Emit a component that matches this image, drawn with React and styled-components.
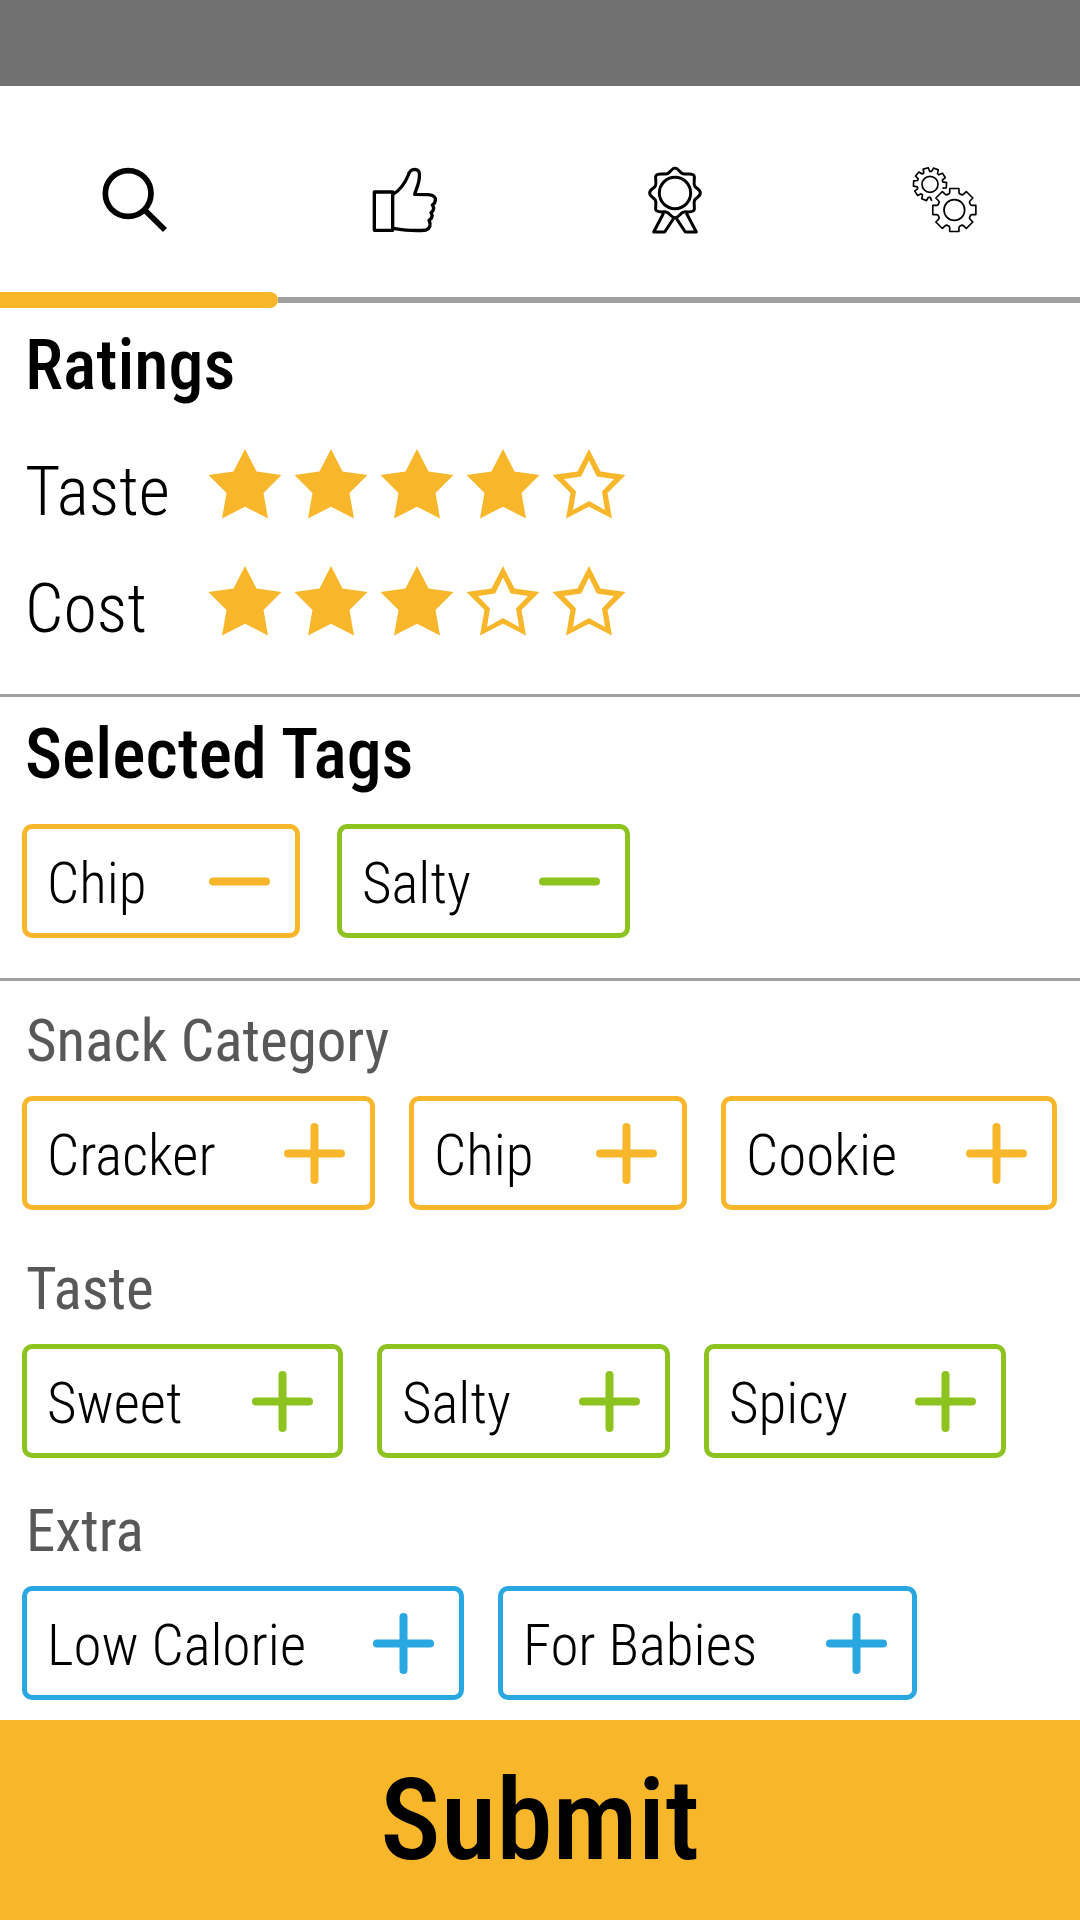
import React, { useState } from "react";
import styled, { createGlobalStyle } from "styled-components";

const colors = {
  amber: "#f8b62b",
  green: "#8dc31f",
  blue: "#29a7e1",
  line: "#9f9f9f",
  muted: "#595757",
};

const GlobalStyle = createGlobalStyle`
  * { box-sizing: border-box; }
  body { margin: 0; background: #ffffff; }
  button { font-family: inherit; color: inherit; cursor: pointer; }
`;

const Page = styled.div`
  display: flex;
  flex-direction: column;
  min-height: 100vh;
  color: #000000;
  font-family: "Roboto Condensed", "Liberation Sans Narrow", "Liberation Sans", sans-serif;
`;

const StatusBar = styled.div`
  height: 86px;
  background: #717171;
`;

const TabBar = styled.nav`
  display: grid;
  grid-template-columns: repeat(4, 1fr);
  padding: 64px 0 42px;
`;

const Tab = styled.button`
  display: flex;
  justify-content: center;
  padding: 0;
  border: 0;
  background: none;
`;

const TabIcon = styled.svg`
  display: block;
  width: 110px;
  height: 100px;
  fill: none;
  stroke: #000000;
  stroke-width: ${(p) => p.$weight};
  stroke-linejoin: round;
`;

const Track = styled.div`
  display: flex;
  align-items: center;
  height: 16px;
`;

const TrackActive = styled.div`
  width: calc(25% + 8px);
  height: 16px;
  border-radius: 0 8px 8px 0;
  background: ${colors.amber};
`;

const TrackRest = styled.div`
  flex: 1;
  height: 6px;
  background: ${colors.line};
`;

const Section = styled.section`
  padding: 17px 22px ${(p) => p.$bottom}px;
  border-bottom: 3px solid ${colors.line};
`;

const Heading = styled.h2`
  margin: 0;
  padding-left: 3px;
  font-size: 70px;
  font-weight: 500;
  line-height: 80px;
`;

const Ratings = styled.div`
  display: grid;
  gap: 31px;
  padding: 36px 0 0 3px;
`;

const RatingRow = styled.div`
  display: flex;
  align-items: center;
`;

const RatingLabel = styled.span`
  width: 183px;
  padding-top: 16px;
  font-size: 68px;
  font-weight: 300;
  line-height: 70px;
`;

const Stars = styled.div`
  display: flex;
  gap: 12px;
`;

const StarLabel = styled.label`
  display: flex;
  cursor: pointer;
`;

const StarInput = styled.input`
  appearance: none;
  width: 0;
  height: 0;
  margin: 0;
`;

const StarShape = styled.svg`
  display: block;
  width: 74px;
  height: 70px;
  fill: ${colors.amber};
  fill-rule: evenodd;
`;

const Filters = styled.main`
  flex: 1;
  padding: 24px 22px 20px;
`;

const Group = styled.section`
  padding-bottom: ${(p) => p.$bottom}px;
`;

const GroupTitle = styled.h3`
  margin: 0 0 19px;
  padding-left: 4px;
  color: ${colors.muted};
  font-size: 59px;
  font-weight: 400;
  line-height: 72px;
`;

const TagList = styled.div`
  display: flex;
  flex-wrap: wrap;
  gap: 20px ${(p) => p.$gap || 34}px;
  padding-top: ${(p) => p.$top || 0}px;
`;

const Tag = styled.button`
  display: flex;
  align-items: center;
  justify-content: space-between;
  min-width: ${(p) => p.$width}px;
  height: 114px;
  padding: 0 25px 0 20px;
  border: 5px solid ${(p) => p.$color};
  border-radius: 10px;
  background: #ffffff;
`;

const TagText = styled.span`
  padding-top: 6px;
  font-size: 57px;
  font-weight: 300;
  line-height: 72px;
`;

const TagIcon = styled.svg`
  display: block;
  width: 61px;
  height: 61px;
  stroke: ${(p) => p.$color};
  stroke-width: 8;
  stroke-linecap: round;
`;

const Submit = styled.button`
  height: 200px;
  padding: 0;
  border: 0;
  background: ${colors.amber};
  font-size: 114px;
  font-weight: 500;
  line-height: 140px;
`;

const STAR_OUTER =
  "M36.5 0 48 22.5 73 26 55 44 59.5 69.5 36.5 57.7 13.5 69.5 18 44 0 26 25 22.5Z";
const STAR_INNER =
  "M36.5 11.5 44.3 27.5 61.5 30 49.5 42.5 52.5 61 36.5 52 20.5 61 23.5 42.5 11.5 30 28.7 27.5Z";

function Rating({ name, value, onChange }) {
  return (
    <RatingRow role="radiogroup" aria-label={name}>
      <RatingLabel>{name}</RatingLabel>
      <Stars>
        {[1, 2, 3, 4, 5].map((n) => (
          <StarLabel key={n}>
            <StarInput
              type="radio"
              name={name}
              aria-label={`${n} of 5`}
              checked={n === value}
              onChange={() => onChange(n)}
            />
            <StarShape viewBox="0 0 73 70" aria-hidden="true">
              <path d={n <= value ? STAR_OUTER : STAR_OUTER + STAR_INNER} />
            </StarShape>
          </StarLabel>
        ))}
      </Stars>
    </RatingRow>
  );
}

function TagButton({ label, color, width, selected }) {
  return (
    <Tag type="button" $color={color} $width={width}>
      <TagText>{label}</TagText>
      <TagIcon viewBox="0 0 61 61" $color={color} aria-hidden="true">
        <path d={selected ? "M4 30.5H57" : "M4 30.5H57M30.5 4V57"} />
      </TagIcon>
    </Tag>
  );
}

// Outline of a cog: each tooth is given as [angle from its axis, radius] corners.
function cogPath(cx, cy, teeth, phase, corners, from = -Infinity, to = Infinity) {
  const points = [];
  for (let i = 0; i < teeth; i += 1) {
    corners.forEach(([offset, radius]) => {
      const angle = phase + (i * 360) / teeth + offset;
      if (angle < from || angle > to) return;
      const rad = (angle * Math.PI) / 180;
      points.push(
        `${(cx + radius * Math.cos(rad)).toFixed(1)} ${(cy + radius * Math.sin(rad)).toFixed(1)}`
      );
    });
  }
  return `M${points.join("L")}`;
}

const bigCog =
  cogPath(193, 180, 8, 0, [
    [-18, 51],
    [-15, 54],
    [-12, 66],
    [12, 66],
    [15, 54],
    [18, 51],
  ]) + "Z";

const smallCog = cogPath(
  120,
  103,
  10,
  75,
  [
    [-14, 39],
    [-9, 50],
    [9, 50],
    [14, 39],
  ],
  80,
  380
);

const groups = [
  {
    title: "Snack Category",
    color: colors.amber,
    bottom: 43,
    tags: [["Cracker", 353], ["Chip", 278], ["Cookie", 336]],
  },
  {
    title: "Taste",
    color: colors.green,
    bottom: 37,
    tags: [["Sweet", 321], ["Salty", 293], ["Spicy", 302]],
  },
  {
    title: "Extra",
    color: colors.blue,
    bottom: 0,
    tags: [["Low Calorie", 442], ["For Babies", 419]],
  },
];

export default function App() {
  const [taste, setTaste] = useState(4);
  const [cost, setCost] = useState(3);

  return (
    <Page>
      <GlobalStyle />
      <StatusBar />
      <TabBar>
        <Tab type="button" aria-label="Search">
          <TabIcon viewBox="0 0 330 300" $weight={17}>
            <circle cx="144.5" cy="130.5" r="68.5" />
            <path d="M194 180 255 240" />
          </TabIcon>
        </Tab>
        <Tab type="button" aria-label="Likes">
          <TabIcon viewBox="0 0 330 300" $weight={10}>
            <path d="M73 126H128V241H73Z" />
            <path d="M130 132C152 119 165 100 175 75C179 62 184 58 194 58C206 59 210 66 208 80C208 100 199 115 194 133L235 134C252 135 258 143 256 151C255 158 254 162 247 165C253 172 252 182 243 188C249 196 246 207 237 211C244 225 240 235 228 240C195 244 160 240 130 235" />
          </TabIcon>
        </Tab>
        <Tab type="button" aria-label="Awards">
          <TabIcon viewBox="0 0 330 300" $weight={9}>
            <circle cx="165" cy="129" r="47" />
            <path d="M165 54C178 54 178 72 192 72C202 73 222 68 223 80C224 90 220 101 224 108C228 116 241 118 241 129C241 140 228 142 224 150C220 158 224 169 223 178C221 190 202 184 192 186C180 188 177 203 165 203C153 203 150 188 138 186C128 184 109 190 107 178C106 169 110 158 106 150C102 142 89 140 89 129C89 118 102 116 106 108C110 101 106 90 107 80C108 68 128 73 138 72C152 72 152 54 165 54Z" />
            <path d="M131 189 101 246H134L161 205M199 189 229 246H196L169 205" />
          </TabIcon>
        </Tab>
        <Tab type="button" aria-label="Settings">
          <TabIcon viewBox="0 0 330 300" $weight={5}>
            <path d={bigCog} />
            <circle cx="193" cy="180" r="31" />
            <path d={smallCog} />
            <circle cx="120" cy="103" r="24" />
          </TabIcon>
        </Tab>
      </TabBar>
      <Track>
        <TrackActive />
        <TrackRest />
      </Track>

      <Section $bottom={50}>
        <Heading>Ratings</Heading>
        <Ratings>
          <Rating name="Taste" value={taste} onChange={setTaste} />
          <Rating name="Cost" value={cost} onChange={setCost} />
        </Ratings>
      </Section>

      <Section $bottom={40}>
        <Heading>Selected Tags</Heading>
        <TagList $gap={37} $top={30}>
          <TagButton label="Chip" color={colors.amber} width={278} selected />
          <TagButton label="Salty" color={colors.green} width={293} selected />
        </TagList>
      </Section>

      <Filters>
        {groups.map((group) => (
          <Group key={group.title} $bottom={group.bottom}>
            <GroupTitle>{group.title}</GroupTitle>
            <TagList>
              {group.tags.map(([label, width]) => (
                <TagButton key={label} label={label} color={group.color} width={width} />
              ))}
            </TagList>
          </Group>
        ))}
      </Filters>

      <Submit type="submit">Submit</Submit>
    </Page>
  );
}
